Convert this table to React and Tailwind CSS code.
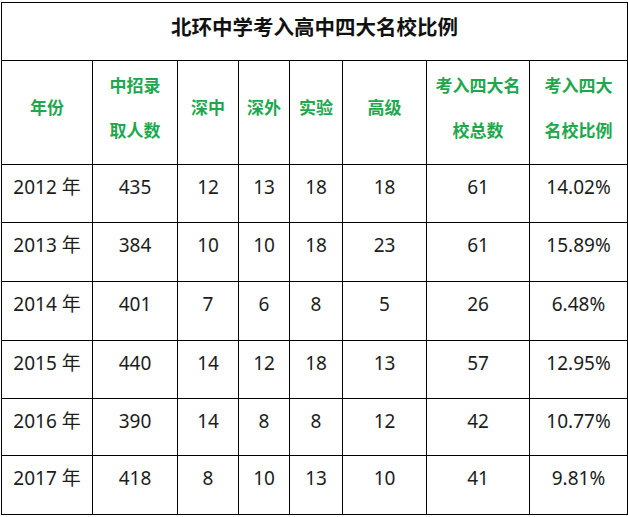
const rows = [
  ["2012 年", "435", "12", "13", "18", "18", "61", "14.02%"],
  ["2013 年", "384", "10", "10", "18", "23", "61", "15.89%"],
  ["2014 年", "401", "7", "6", "8", "5", "26", "6.48%"],
  ["2015 年", "440", "14", "12", "18", "13", "57", "12.95%"],
  ["2016 年", "390", "14", "8", "8", "12", "42", "10.77%"],
  ["2017 年", "418", "8", "10", "13", "10", "41", "9.81%"],
];

const heights = ["h-[58px]", "h-[59px]", "h-[59px]", "h-[58px]", "h-[57px]", "h-[59px]"];

const headers = [
  ["年份"],
  ["中招录", "取人数"],
  ["深中"],
  ["深外"],
  ["实验"],
  ["高级"],
  ["考入四大名", "校总数"],
  ["考入四大", "名校比例"],
];

const App = () => {
  return (
    <div
      className="w-[628px] h-[517px] bg-white pl-[1px] pt-[2px]"
      style={{ fontFamily: '"Noto Sans", "Noto Sans CJK SC", sans-serif' }}
    >
      <table className="w-[626px] table-fixed border-collapse">
        <colgroup>
          <col className="w-[91px]" />
          <col className="w-[85px]" />
          <col className="w-[61px]" />
          <col className="w-[51px]" />
          <col className="w-[53px]" />
          <col className="w-[84px]" />
          <col className="w-[103px]" />
          <col className="w-[98px]" />
        </colgroup>
        <thead>
          <tr className="h-[58px]">
            <th
              colSpan={8}
              className="border border-black pb-[8px] text-center align-middle text-[20.5px] font-bold text-[#111]"
            >
              北环中学考入高中四大名校比例
            </th>
          </tr>
          <tr className="h-[104px]">
            {headers.map((lines, i) => (
              <th
                key={i}
                className="border border-black pb-[10px] text-center align-middle text-[17px] font-bold leading-[45px] text-[#1ea84e]"
              >
                {lines.map((l) => (
                  <div key={l}>{l}</div>
                ))}
              </th>
            ))}
          </tr>
        </thead>
        <tbody>
          {rows.map((row, r) => (
            <tr key={r} className={heights[r]}>
              {row.map((cell, c) => (
                <td
                  key={c}
                  className="border border-black pt-[8px] text-center align-top text-[19px] leading-[28px] text-[#1c1c1c]"
                >
                  {cell}
                </td>
              ))}
            </tr>
          ))}
        </tbody>
      </table>
    </div>
  );
};

export default App;
